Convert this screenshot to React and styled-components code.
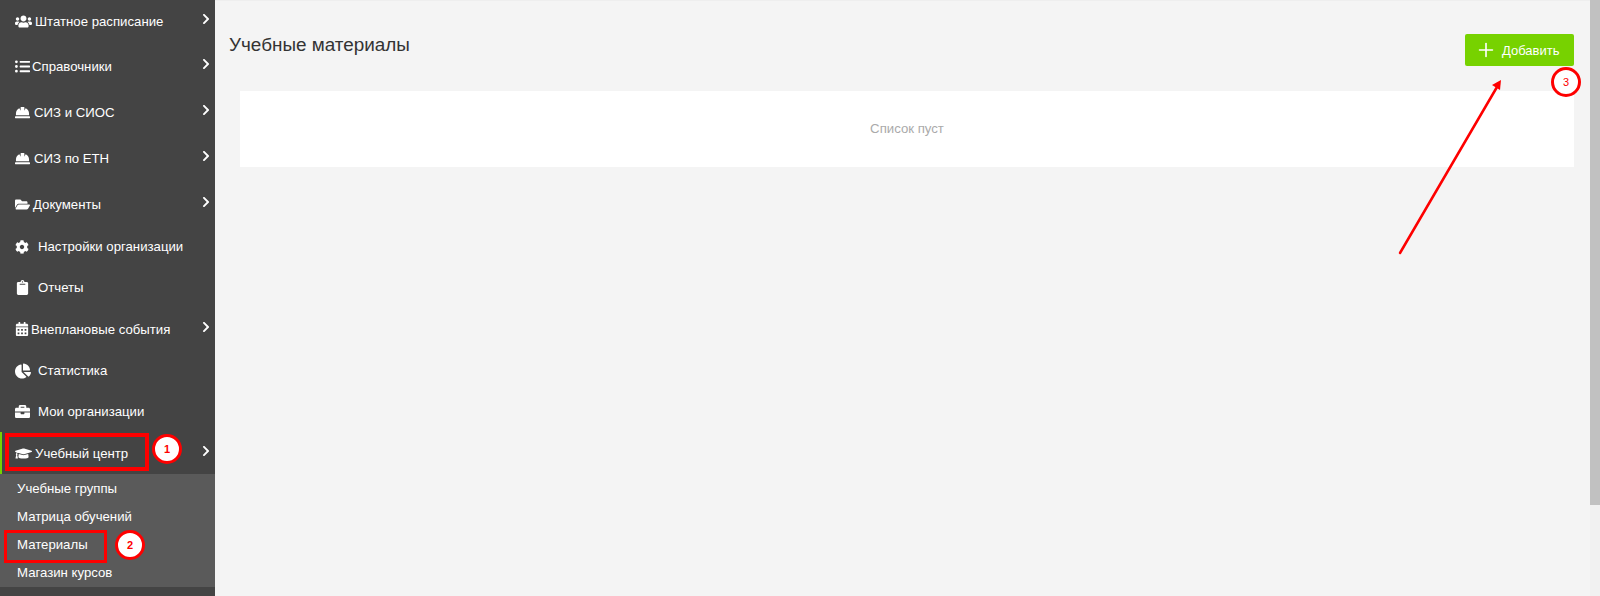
import React from 'react';
import styled, { createGlobalStyle } from 'styled-components';
import {
    FaUsers, FaListUl, FaHardHat, FaFolderOpen, FaCog, FaClipboard,
    FaCalendarAlt, FaChartPie, FaBriefcase, FaGraduationCap, FaChevronRight,
} from 'react-icons/fa';
import { Plus } from 'lucide-react';

const GlobalStyle = createGlobalStyle`
    html, body {
        margin: 0;
        padding: 0;
        height: 100%;
        overflow: hidden;
        font-family: "Liberation Sans", Arial, sans-serif;
    }
`;

const Page = styled.div`
    position: relative;
    display: flex;
    width: 1600px;
    height: 596px;
    overflow: hidden;
    background-color: #f4f4f4;
`;

const Sidebar = styled.nav`
    flex: 0 0 215px;
    height: 596px;
    overflow: hidden;
    background-color: #444444;
    display: flex;
    flex-direction: column;
`;

const MenuRow = styled.div`
    flex: 0 0 ${props => props.$height}px;
    display: flex;
    align-items: center;
    padding-left: ${props => props.$active ? 13 : 15}px;
    padding-right: 3px;
    color: #fff;
    font-size: 13.2px;
    border-left: ${props => props.$active ? '2px solid #77d200' : 'none'};
    box-sizing: border-box;
`;

const IconSlot = styled.span`
    flex: 0 0 ${props => props.$width}px;
    display: flex;
    align-items: center;
    font-size: ${props => props.$size}px;
`;

const Arrow = styled(FaChevronRight)`
    margin-left: auto;
    font-size: 12px;
    margin-top: -5px;
`;

const SubMenu = styled.div`
    flex: 0 0 113px;
    background-color: #5a5a5a;
    display: flex;
    flex-direction: column;
`;

const SubItem = styled.div`
    flex: 0 0 28px;
    display: flex;
    align-items: center;
    padding-left: 17px;
    color: #fff;
    font-size: 13.2px;
`;

const Main = styled.main`
    flex: 1;
    min-width: 0;
    box-sizing: border-box;
    padding: 33px 16px 0 14px;
    border-top: 1px solid #eeeeee;
`;

const Header = styled.div`
    display: flex;
    justify-content: space-between;
    align-items: flex-start;
`;

const Title = styled.h1`
    margin: 1px 0 0;
    font-size: 18.9px;
    font-weight: 400;
    color: #333;
    line-height: 20px;
`;

const AddButton = styled.button`
    display: flex;
    align-items: center;
    gap: 5px;
    width: 109px;
    height: 32px;
    padding: 0 0 0 10px;
    border: none;
    border-radius: 2px;
    background-color: #77d200;
    color: #fff;
    font-family: inherit;
    font-size: 13px;
    box-sizing: border-box;
`;

const EmptyPanel = styled.div`
    margin: 25px 0 0 11px;
    height: 76px;
    padding-bottom: 2px;
    box-sizing: border-box;
    background-color: #fff;
    display: flex;
    align-items: center;
    justify-content: center;
    color: #aaaaaa;
    font-size: 13.2px;
`;

const Scrollbar = styled.div`
    flex: 0 0 10px;
    height: 596px;
    background-color: #f1f1f1;
`;

const ScrollThumb = styled.div`
    height: 505px;
    background-color: #c1c1c1;
`;

// annotations painted on top of the screenshot
const RedBox = styled.div`
    position: absolute;
    left: ${props => props.$x}px;
    top: ${props => props.$y}px;
    width: ${props => props.$w}px;
    height: ${props => props.$h}px;
    border: ${props => props.$thick}px solid #fe0000;
    box-sizing: border-box;
`;

const Badge = styled.div`
    position: absolute;
    left: ${props => props.$x - 15}px;
    top: ${props => props.$y - 15}px;
    width: 30px;
    height: 30px;
    border: 3px solid #fe0000;
    border-radius: 50%;
    background-color: #fff;
    color: #fe0000;
    font-size: 11px;
    font-weight: ${props => props.$weight};
    display: flex;
    align-items: center;
    justify-content: center;
    box-sizing: border-box;
`;

const ArrowLayer = styled.svg`
    position: absolute;
    left: 0;
    top: 0;
    pointer-events: none;
`;

const menuTop = [
    { label: 'Штатное расписание', icon: FaUsers, slot: 20, size: 17, height: 43, arrow: true },
    { label: 'Справочники', icon: FaListUl, slot: 17, size: 15, height: 46, arrow: true },
    { label: 'СИЗ и СИОС', icon: FaHardHat, slot: 19, size: 15, height: 46, arrow: true },
    { label: 'СИЗ по ЕТН', icon: FaHardHat, slot: 19, size: 15, height: 46, arrow: true },
    { label: 'Документы', icon: FaFolderOpen, slot: 18, size: 15, height: 46, arrow: true },
    { label: 'Настройки организации', icon: FaCog, slot: 23, size: 14, height: 39 },
    { label: 'Отчеты', icon: FaClipboard, slot: 23, size: 15, height: 42 },
    { label: 'Внеплановые события', icon: FaCalendarAlt, slot: 16, size: 14, height: 42, arrow: true },
    { label: 'Статистика', icon: FaChartPie, slot: 23, size: 16, height: 41 },
    { label: 'Мои организации', icon: FaBriefcase, slot: 23, size: 15, height: 41 },
    { label: 'Учебный центр', icon: FaGraduationCap, slot: 20, size: 17, height: 42, arrow: true, active: true },
];

const subMenu = ['Учебные группы', 'Матрица обучений', 'Материалы', 'Магазин курсов'];

export default function App() {
    return (
        <Page>
            <GlobalStyle />
            <Sidebar>
                {menuTop.map(item => {
                    const Icon = item.icon;
                    return (
                        <MenuRow key={item.label} $height={item.height} $active={item.active}>
                            <IconSlot $width={item.slot} $size={item.size}><Icon /></IconSlot>
                            {item.label}
                            {item.arrow && <Arrow />}
                        </MenuRow>
                    );
                })}
                <SubMenu>
                    {subMenu.map(label => <SubItem key={label}>{label}</SubItem>)}
                </SubMenu>
            </Sidebar>
            <Main>
                <Header>
                    <Title>Учебные материалы</Title>
                    <AddButton><Plus size={22} strokeWidth={1.8} />Добавить</AddButton>
                </Header>
                <EmptyPanel>Список пуст</EmptyPanel>
            </Main>
            <Scrollbar><ScrollThumb /></Scrollbar>

            <RedBox $x={5} $y={433} $w={144} $h={38} $thick={4} />
            <RedBox $x={4} $y={530} $w={103} $h={33} $thick={3} />
            <Badge $x={167} $y={449} $weight={700}>1</Badge>
            <Badge $x={130} $y={545} $weight={700}>2</Badge>
            <Badge $x={1566} $y={82} $weight={400}>3</Badge>
            <ArrowLayer width="1600" height="596">
                <line x1="1400" y1="253" x2="1497" y2="87" stroke="#fe0000" strokeWidth="2.5" strokeLinecap="round" />
                <polygon points="1501,80 1500,90 1492,85" fill="#fe0000" />
            </ArrowLayer>
        </Page>
    );
}
